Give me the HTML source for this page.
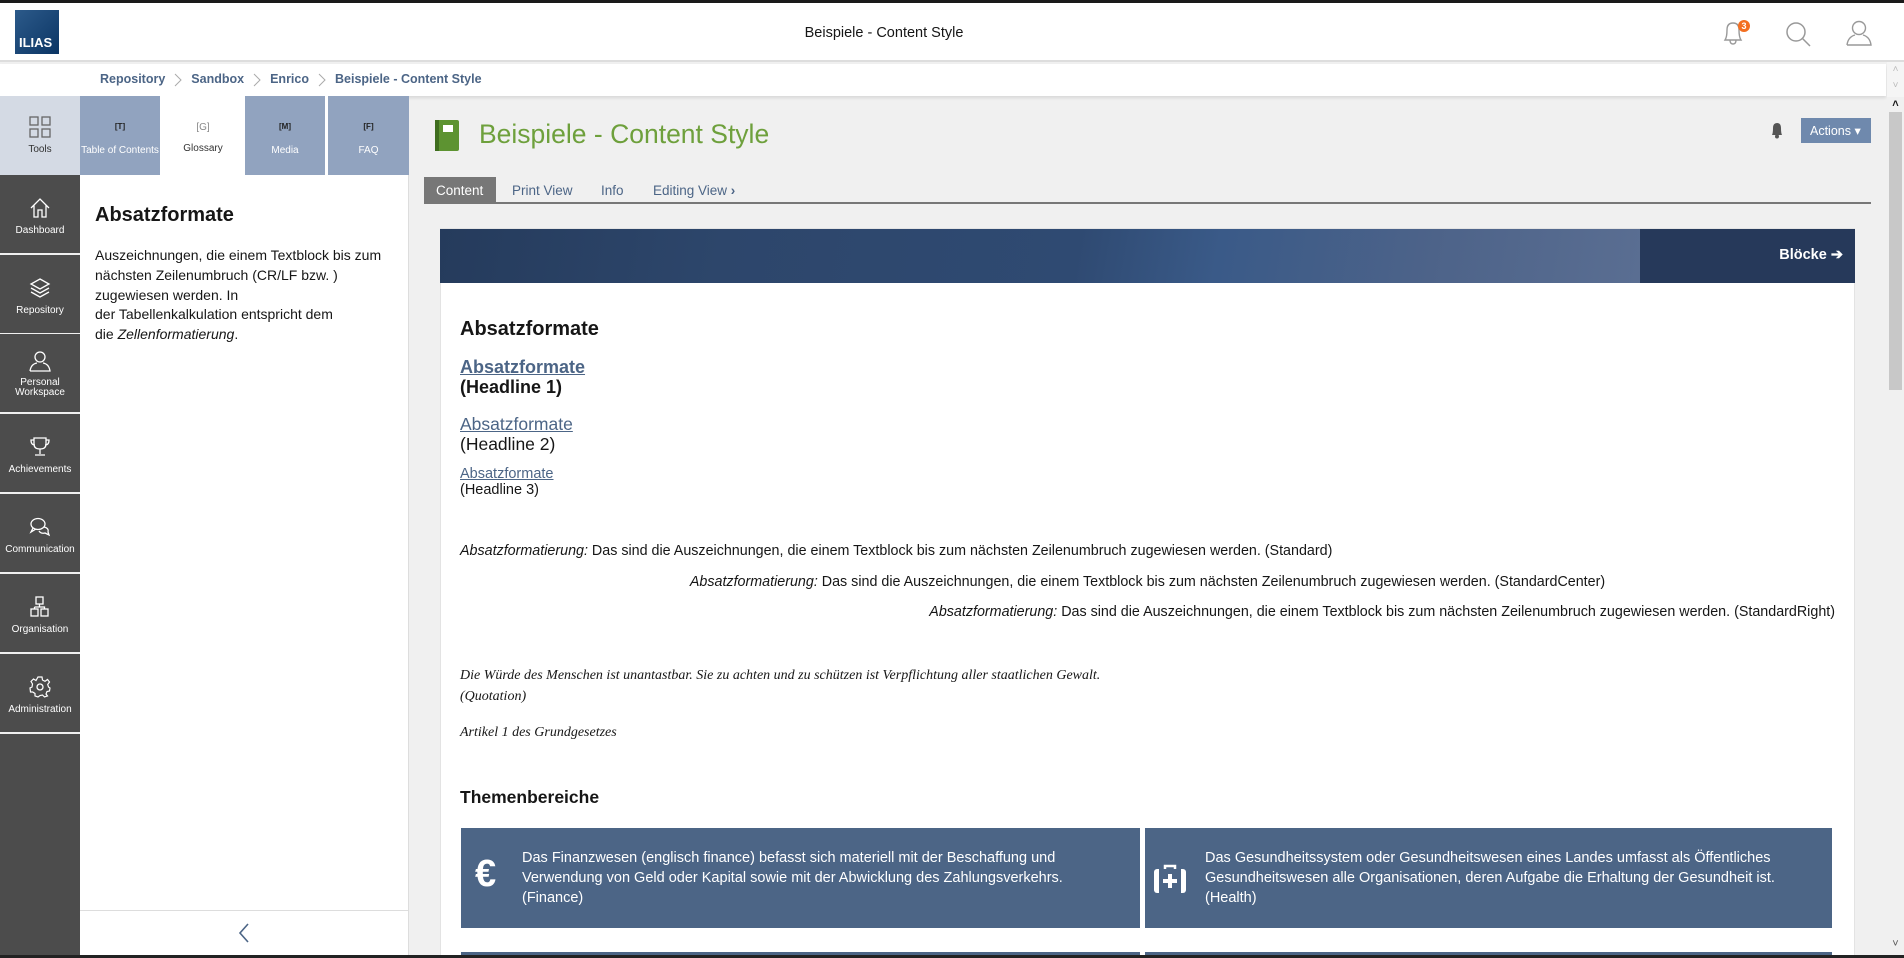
<!DOCTYPE html>
<html><head><meta charset="utf-8"><style>
*{box-sizing:border-box;margin:0;padding:0}
body{width:1904px;height:958px;overflow:hidden;font-family:"Liberation Sans",sans-serif;background:#f0f0f0;position:relative;color:#161616}
.abs{position:absolute}
a{color:#4c6586}
.mb{position:absolute;left:0;width:80px;height:80px;background:#4c4c4c;color:#fff;font-size:10px;text-align:center;border-bottom:2px solid #f0f0f0}
.mb svg{display:block;margin:0 auto 6px}
.tab{position:absolute;top:96px;height:79px;background:#91a3bf;color:#fff;font-size:10px;text-align:center;padding-top:26px}
.tab b{display:block;font-size:8px;color:#222;margin-bottom:14px}
.card{position:absolute;top:828px;height:100px;background:#4c6586;color:#fff;font-size:14.5px;line-height:20px}
.sep{display:inline-block;vertical-align:middle;margin:0 9px}
</style></head><body>
<div class="abs" style="left:0;top:0;width:1904px;height:3px;background:#1a1a1a"></div>
<div class="abs" style="left:0;top:3px;width:1904px;height:59px;background:#fff;border-bottom:2px solid #ddd"></div>
<div class="abs" style="left:15px;top:10px;width:44px;height:44px;background:linear-gradient(135deg,#2c5a8a,#0b3564);color:#fff;font-weight:bold;font-size:13px;padding:25px 0 0 4px">ILIAS</div>
<div class="abs" style="left:0;width:1768px;top:25px;text-align:center;font-size:14.5px">Beispiele - Content Style</div>
<svg class="abs" style="left:1718px;top:18px" width="34" height="30" viewBox="0 0 34 30"><path d="M7 22 Q9 19 9 12 Q9 5 15 5 Q21 5 21 12 Q21 19 23 22 Z M12 22 Q12 26 15 26 Q18 26 18 22" fill="none" stroke="#999" stroke-width="1.4"/><circle cx="26" cy="8" r="6" fill="#f36f21"/><text x="26" y="11" font-size="9" fill="#fff" text-anchor="middle" font-family="Liberation Sans" font-weight="bold">3</text></svg>
<svg class="abs" style="left:1784px;top:20px" width="28" height="28"><circle cx="12" cy="12" r="9" fill="none" stroke="#999" stroke-width="1.5"/><path d="M18.5 18.5 L26 26" stroke="#999" stroke-width="1.5"/></svg>
<svg class="abs" style="left:1845px;top:19px" width="28" height="28"><circle cx="14" cy="9" r="6.5" fill="none" stroke="#999" stroke-width="1.4"/><path d="M2 26 Q3 18 10 16 M18 16 Q25 18 26 26 L2 26" fill="none" stroke="#999" stroke-width="1.4"/></svg>
<div class="abs" style="left:0;top:64px;width:1886px;height:32px;background:#fff;box-shadow:0 2px 3px rgba(0,0,0,.1);font-size:12.5px;font-weight:bold;color:#4c6586;padding:8px 0 0 100px">Repository<svg class="sep" width="8" height="14"><path d="M1 1 L7 7 L1 13" fill="none" stroke="#aaa"/></svg>Sandbox<svg class="sep" width="8" height="14"><path d="M1 1 L7 7 L1 13" fill="none" stroke="#aaa"/></svg>Enrico<svg class="sep" width="8" height="14"><path d="M1 1 L7 7 L1 13" fill="none" stroke="#aaa"/></svg>Beispiele - Content Style</div>
<div class="abs" style="left:1887px;top:62px;width:17px;height:35px;background:#f5f5f5;color:#bbb;font-size:10px;text-align:center;line-height:16px">˄<br>˅</div>
<div class="abs" style="left:1887px;top:97px;width:17px;height:861px;background:#f0f0f0"></div>
<div class="abs" style="left:1889px;top:112px;width:13px;height:278px;background:#c8c8c8"></div>
<div class="abs" style="left:1887px;top:98px;width:17px;font-size:11px;text-align:center;font-weight:bold">˄</div>
<div class="abs" style="left:1887px;top:938px;width:17px;font-size:11px;text-align:center;color:#555">˅</div>
<div class="abs" style="left:0;top:96px;width:80px;height:862px;background:#4c4c4c"></div>
<div class="mb" style="top:96px;background:#d4dae4;color:#333;padding-top:20px;border:none;height:79px"><svg width="22" height="22"><g fill="none" stroke="#666" stroke-width="1.3"><rect x="1" y="1" width="8" height="8"/><rect x="13" y="1" width="8" height="8"/><rect x="1" y="13" width="8" height="8"/><rect x="13" y="13" width="8" height="8"/></g></svg>Tools</div>
<div class="mb" style="top:175px;padding-top:22px"><svg width="22" height="22"><path d="M2 11 L11 2 L20 11 M5 8 V20 H9 V13 H13 V20 H17 V8" fill="none" stroke="#fff" stroke-width="1.3"/></svg>Dashboard</div>
<div class="mb" style="top:255px;padding-top:22px"><svg width="22" height="22"><path d="M11 2 L20 7 L11 12 L2 7Z M2 11 L11 16 L20 11 M2 15 L11 20 L20 15" fill="none" stroke="#fff" stroke-width="1.3"/></svg>Repository</div>
<div class="mb" style="top:334px;padding-top:16px;line-height:10px"><svg width="22" height="22"><circle cx="11" cy="7" r="5" fill="none" stroke="#fff" stroke-width="1.3"/><path d="M1 21 Q2 14 8 13 M14 13 Q20 14 21 21 H1" fill="none" stroke="#fff" stroke-width="1.3"/></svg>Personal<br>Workspace</div>
<div class="mb" style="top:414px;padding-top:22px"><svg width="22" height="22"><path d="M5 2 H17 V8 Q17 13 11 13 Q5 13 5 8Z M5 4 H2 Q2 9 6 9 M17 4 H20 Q20 9 16 9 M11 13 V18 M6 19 H16" fill="none" stroke="#fff" stroke-width="1.3"/></svg>Achievements</div>
<div class="mb" style="top:494px;padding-top:22px"><svg width="22" height="22"><ellipse cx="9" cy="8" rx="7" ry="5.5" fill="none" stroke="#fff" stroke-width="1.3"/><path d="M4 12 L2 16 L7 13 M15 11 Q20 12 19 16 L20 19 L16 17 Q12 18 10 15" fill="none" stroke="#fff" stroke-width="1.3"/></svg>Communication</div>
<div class="mb" style="top:574px;padding-top:22px"><svg width="22" height="22"><g fill="none" stroke="#fff" stroke-width="1.3"><rect x="7" y="1" width="7" height="7"/><rect x="2" y="13" width="7" height="7"/><rect x="12" y="13" width="7" height="7"/><path d="M10.5 8 V11 M5.5 11 H15.5 V13 M5.5 11 V13"/></g></svg>Organisation</div>
<div class="mb" style="top:654px;padding-top:22px"><svg width="22" height="22"><circle cx="11" cy="11" r="3" fill="none" stroke="#fff" stroke-width="1.3"/><path d="M9 1 H13 L13.5 4 L16 5.3 L18.5 3.5 L20.5 6 L18.7 8.5 L19.5 11 L21 12 L20.5 15 L18 15.5 L17 18 L18.5 20 L15.5 21 L13.5 19 L11 19.5 L9 21 L6 20 L6 17.5 L3.7 16 L1.5 16 L1 12 L3 11 L3.5 8 L2 5.5 L4.5 3 L7 4.5 Z" fill="none" stroke="#fff" stroke-width="1.2"/></svg>Administration</div>
<div class="abs" style="left:80px;top:96px;width:329px;height:862px;background:#fff;border-right:1px solid #ddd"></div>
<div class="tab" style="left:80px;width:80px"><b>[T]</b>Table of Contents</div>
<div class="tab" style="left:163px;width:80px;background:#fff;color:#333"><b style="color:#888;font-weight:normal;font-size:10px;margin-bottom:10px">[G]</b>Glossary</div>
<div class="tab" style="left:245px;width:80px"><b>[M]</b>Media</div>
<div class="tab" style="left:328px;width:81px"><b>[F]</b>FAQ</div>
<div class="abs" style="left:95px;top:204px;font-size:20px;font-weight:bold">Absatzformate</div>
<div class="abs" style="left:95px;top:246px;width:310px;font-size:14px;line-height:19.8px">Auszeichnungen, die einem Textblock bis zum nächsten Zeilenumbruch (CR/LF bzw. ) zugewiesen werden. In<br>der Tabellenkalkulation entspricht dem<br>die <i>Zellenformatierung</i>.</div>
<div class="abs" style="left:80px;top:910px;width:329px;height:1px;background:#ddd"></div>
<svg class="abs" style="left:237px;top:922px" width="14" height="22"><path d="M11 2 L3 11 L11 20" fill="none" stroke="#4c6586" stroke-width="1.6"/></svg>
<svg class="abs" style="left:434px;top:119px" width="26" height="33"><rect x="1" y="1" width="24" height="31" rx="2" fill="#5d9331"/><rect x="1" y="1" width="4" height="31" fill="#3f6d1e"/><rect x="9" y="6" width="10" height="7" fill="#fff"/></svg>
<div class="abs" style="left:479px;top:119px;font-size:26.5px;color:#6ea03c">Beispiele - Content Style</div>
<svg class="abs" style="left:1769px;top:121px" width="16" height="18"><path d="M3 14 Q4 12 4 7 Q4 2 8 2 Q12 2 12 7 Q12 12 13 14Z" fill="#555"/><circle cx="8" cy="15.5" r="2" fill="#555"/></svg>
<div class="abs" style="left:1801px;top:118px;width:70px;height:25px;background:#6f89ad;color:#fff;font-size:12.5px;padding:5px 0 0 9px">Actions ▾</div>
<div class="abs" style="left:424px;top:177px;width:72px;height:26px;background:#777;color:#fff;font-size:13.5px;padding:6px 0 0 12px">Content</div>
<div class="abs" style="left:512px;top:183px;font-size:13.5px;color:#4c6586">Print View</div>
<div class="abs" style="left:601px;top:183px;font-size:13.5px;color:#4c6586">Info</div>
<div class="abs" style="left:653px;top:183px;font-size:13.5px;color:#4c6586">Editing View <b>›</b></div>
<div class="abs" style="left:424px;top:202px;width:1447px;height:2px;background:#777"></div>
<div class="abs" style="left:440px;top:228px;width:1415px;height:730px;background:#fff;border:1px solid #e3e3e3"></div>
<div class="abs" style="left:440px;top:229px;width:1415px;height:54px;background:linear-gradient(100deg,#253b5c 0%,#2d466b 20%,#2f4a72 45%,#3a5a88 55%,#4d6389 70%,#5a6e92 85%,#667a9a 100%)"></div>
<div class="abs" style="left:1640px;top:229px;width:215px;height:54px;background:#26395a;color:#fff;font-weight:bold;font-size:14.5px;text-align:right;padding:18px 12px 0 0">Blöcke ➔</div>
<div class="abs" style="left:460px;top:318px;font-size:20px;font-weight:bold">Absatzformate</div>
<div class="abs" style="left:460px;top:357px;font-size:18px;font-weight:bold;line-height:20px"><a href="#">Absatzformate</a><br>(Headline 1)</div>
<div class="abs" style="left:460px;top:414px;font-size:17.5px;line-height:20px"><a href="#">Absatzformate</a><br>(Headline 2)</div>
<div class="abs" style="left:460px;top:467px;font-size:14.5px;line-height:15.5px"><a href="#">Absatzformate</a><br>(Headline 3)</div>
<div class="abs" style="left:460px;top:543px;font-size:14.3px"><i>Absatzformatierung:</i> Das sind die Auszeichnungen, die einem Textblock bis zum nächsten Zeilenumbruch  zugewiesen werden. (Standard)</div>
<div class="abs" style="left:460px;width:1375px;top:574px;font-size:14.3px;text-align:center"><i>Absatzformatierung:</i> Das sind die Auszeichnungen, die einem Textblock bis zum nächsten Zeilenumbruch  zugewiesen werden. (StandardCenter)</div>
<div class="abs" style="left:460px;width:1375px;top:604px;font-size:14.3px;text-align:right"><i>Absatzformatierung:</i> Das sind die Auszeichnungen, die einem Textblock bis zum nächsten Zeilenumbruch  zugewiesen werden. (StandardRight)</div>
<div class="abs" style="left:460px;top:665px;font-family:'Liberation Serif',serif;font-style:italic;font-size:14px;line-height:21px">Die Würde des Menschen ist unantastbar. Sie zu achten und zu schützen ist Verpflichtung aller staatlichen Gewalt.<br>(Quotation)</div>
<div class="abs" style="left:460px;top:725px;font-family:'Liberation Serif',serif;font-style:italic;font-size:14px">Artikel 1 des Grundgesetzes</div>
<div class="abs" style="left:460px;top:787px;font-size:17.5px;font-weight:bold">Themenbereiche</div>
<div class="card" style="left:461px;width:679px;padding:20px 60px 0 61px"><span class="abs" style="left:14px;top:26px;font-size:38px;font-weight:bold;line-height:40px">€</span>Das Finanzwesen (englisch finance) befasst sich materiell mit der Beschaffung und Verwendung von Geld oder Kapital sowie mit der Abwicklung des Zahlungsverkehrs.<br>(Finance)</div>
<div class="card" style="left:1145px;width:687px;padding:20px 20px 0 60px"><svg class="abs" style="left:8px;top:36px" width="34" height="30"><path d="M12 5 V2 H22 V5" fill="none" stroke="#fff" stroke-width="2.5"/><rect x="1" y="5" width="32" height="24" rx="3" fill="#fff"/><rect x="6" y="5" width="22" height="24" fill="#4c6586"/><path d="M17 10 V24 M10 17 H24" stroke="#fff" stroke-width="4"/></svg>Das Gesundheitssystem oder Gesundheitswesen eines Landes umfasst als Öffentliches Gesundheitswesen alle Organisationen, deren Aufgabe die Erhaltung der Gesundheit ist.<br>(Health)</div>
<div class="abs" style="left:461px;top:952px;width:679px;height:6px;background:#4c6586"></div>
<div class="abs" style="left:1145px;top:952px;width:687px;height:6px;background:#4c6586"></div>
<div class="abs" style="left:0;top:955px;width:1904px;height:3px;background:#222"></div>
</body></html>
